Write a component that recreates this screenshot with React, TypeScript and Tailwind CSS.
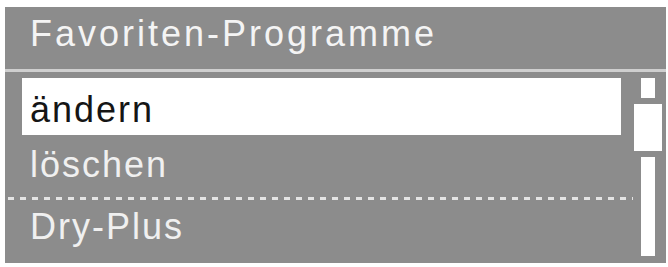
const FONT = "font-['Liberation_Sans',Arial,sans-serif]";

function ScrollBar() {
  return (
    <div className="flex w-[28px] flex-col items-center">
      <div className="h-[20px] w-[14px] bg-white" />
      <div className="mt-[6px] h-[47px] w-[28px] bg-white" />
      <div className="mt-[6px] h-[99px] w-[14px] bg-white" />
    </div>
  );
}

export default function App() {
  return (
    <div className={`h-[267px] w-[668px] bg-white pl-[5px] pt-[7px] ${FONT}`}>
      <div className="flex h-[256px] w-[661px] flex-col bg-[#8c8c8c]">
        <div className="h-[62px] pl-[25px] pt-[7px] text-[36px] leading-[40px] tracking-[3px] text-[#f4f4f4]">
          Favoriten-Programme
        </div>
        <div className="h-[3px] bg-[#cfcfcf]" />
        <div className="flex pt-[6px]">
          <div className="w-[628px]">
            <div className="ml-[17px] h-[57px] w-[599px] bg-white pl-[8px] pt-[12px] text-[36px] leading-[40px] tracking-[2px] text-[#151515]">
              ändern
            </div>
            <div className="h-[62px] pl-[25px] pt-[10px] text-[36px] leading-[40px] tracking-[2px] text-[#f0f0f0]">
              löschen
            </div>
            <div className="h-[3px] bg-[repeating-linear-gradient(90deg,transparent_0_3px,#e4e4e4_3px_9px,transparent_9px_12px)]" />
            <div className="pl-[25px] pt-[7px] text-[36px] leading-[40px] tracking-[2px] text-[#f0f0f0]">
              Dry-Plus
            </div>
          </div>
          <div className="ml-[1px]">
            <ScrollBar />
          </div>
        </div>
      </div>
    </div>
  );
}
